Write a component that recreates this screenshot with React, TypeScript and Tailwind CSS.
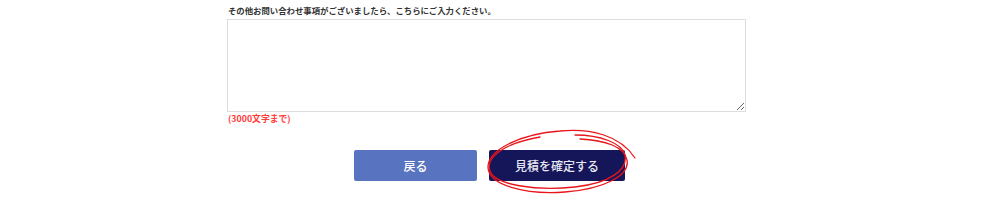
export default function App() {
  return (
    <div className="w-full h-[200px] bg-white font-['Noto_Sans_CJK_JP','Noto_Sans',sans-serif] overflow-hidden">
      <div className="ml-[227px] w-[519px]">
        {/* Inquiry label */}
        <p className="mt-[4px] mb-[3px] pl-[1px] text-[8.4px] leading-[12px] font-bold text-[#333333]">
          その他お問い合わせ事項がございましたら、こちらにご入力ください。
        </p>
        <textarea className="block w-[519px] h-[93px] border border-[#dddddd] bg-white outline-none" />
        <p className="mt-[1px] pl-[1px] text-[8.8px] leading-[12px] font-bold text-[#ff3b3b]">
          (3000文字まで)
        </p>

        {/* Buttons */}
        <div className="mt-[25px] pl-[127px] flex gap-[12px]">
          <button className="w-[123px] h-[31px] rounded-[2px] bg-[#5873bf] text-white text-[12px] font-medium">
            戻る
          </button>
          <div className="relative">
            <button className="w-[136px] h-[31px] rounded-[2px] bg-[#15155a] text-[#e8e8f2] text-[12px] font-medium">
              見積を確定する
            </button>
            <svg
              className="absolute left-[-9px] top-[-25px] pointer-events-none"
              width="160"
              height="73"
              viewBox="0 0 160 73"
              fill="none"
              stroke="#e8161b"
              strokeWidth="1.3"
              strokeLinecap="round"
            >
              <path d="M155,33 C140,10 110,3 80,6 C40,9 8,25 8,42 C8,60 45,70 85,67 C125,64 150,50 147,35 C145,22 125,15 100,14" />
              <path d="M60,12 C25,18 5,32 10,46 C15,60 55,66 95,62 C130,58 148,45 145,30 C142,18 120,10 95,10" />
            </svg>
          </div>
        </div>
      </div>
    </div>
  )
}
